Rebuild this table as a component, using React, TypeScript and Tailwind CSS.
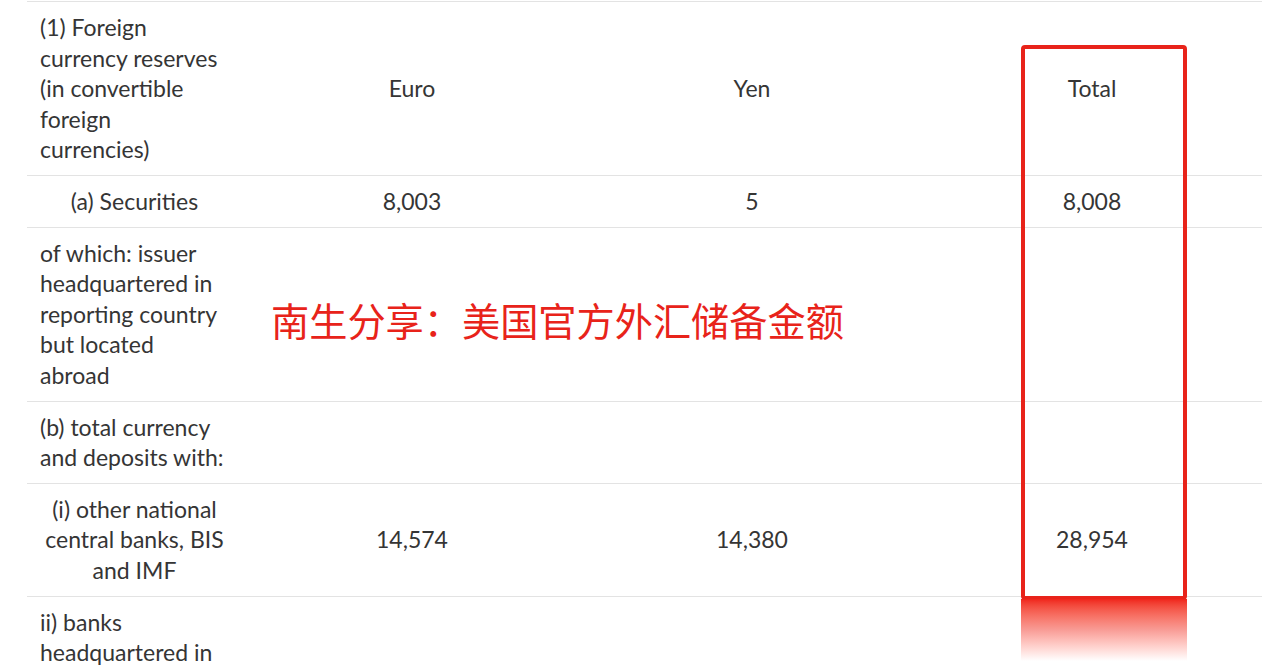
import React from 'react';

type Row = {
  label: string[];
  align: 'left' | 'center';
  euro?: string;
  yen?: string;
  total?: string;
};

const rows: Row[] = [
  {
    label: ['(1) Foreign', 'currency reserves', '(in convertible', 'foreign', 'currencies)'],
    align: 'left',
    euro: 'Euro',
    yen: 'Yen',
    total: 'Total',
  },
  { label: ['(a) Securities'], align: 'center', euro: '8,003', yen: '5', total: '8,008' },
  {
    label: ['of which: issuer', 'headquartered in', 'reporting country', 'but located', 'abroad'],
    align: 'left',
  },
  { label: ['(b) total currency', 'and deposits with:'], align: 'left' },
  {
    label: ['(i) other national', 'central banks, BIS', 'and IMF'],
    align: 'center',
    euro: '14,574',
    yen: '14,380',
    total: '28,954',
  },
  { label: ['ii) banks', 'headquartered in', 'reporting country'], align: 'left' },
];

export default function App() {
  return (
    <div
      className="relative w-[1278px] h-[671px] overflow-hidden bg-white text-[#353535]"
      style={{ fontFamily: '"Lato", "Liberation Sans", sans-serif' }}
    >
      <div className="pl-[27px] pr-[16px] pt-[1px]">
        <table className="w-[1235px] border-collapse table-fixed text-[23px] leading-[30.6px]">
          <colgroup>
            <col className="w-[215px]" />
            <col className="w-[340px]" />
            <col className="w-[340px]" />
            <col className="w-[340px]" />
          </colgroup>
          <tbody>
            {rows.map((row, i) => (
              <tr key={i} className="border-t border-[#e3e3e3]">
                <td
                  className={`py-[10px] px-[13px] align-top ${
                    row.align === 'center' ? 'text-center' : 'text-left'
                  }`}
                >
                  {row.label.map((line, j) => (
                    <div key={j} className="whitespace-nowrap">{line}</div>
                  ))}
                </td>
                <td className="py-[10px] text-center align-middle">{row.euro}</td>
                <td className="py-[10px] text-center align-middle">{row.yen}</td>
                <td className="py-[10px] text-center align-middle">{row.total}</td>
              </tr>
            ))}
          </tbody>
        </table>
      </div>

      {/* annotation: highlight around Total column */}
      <div className="absolute left-[1021px] top-[45px] w-[166px] h-[555px] border-[4px] border-[#e8231a] rounded-[4px]" />
      <div className="absolute left-[1021px] top-[599px] w-[166px] h-[62px] bg-gradient-to-b from-[#f0231a] via-[#f89c96] to-white" />

      <div
        className="absolute left-[271px] top-[296px] text-[38.2px] leading-[48px] text-[#e8231a]"
        style={{ fontFamily: '"Noto Sans CJK SC", sans-serif' }}
      >
        南生分享：美国官方外汇储备金额
      </div>
    </div>
  );
}
